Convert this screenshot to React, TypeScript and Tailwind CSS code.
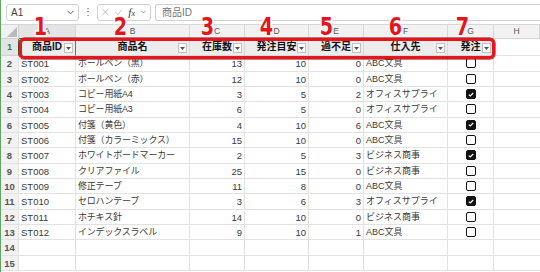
import { Fragment } from "react";

type Row = {
  id: string;
  name: string;
  stock: number;
  target: number;
  shortage: number;
  supplier: string;
  order: boolean;
};

const rows: Row[] = [
  { id: "ST001", name: "ボールペン（黒）", stock: 13, target: 10, shortage: 0, supplier: "ABC文具", order: false },
  { id: "ST002", name: "ボールペン（赤）", stock: 12, target: 10, shortage: 0, supplier: "ABC文具", order: false },
  { id: "ST003", name: "コピー用紙A4", stock: 3, target: 5, shortage: 2, supplier: "オフィスサプライ", order: true },
  { id: "ST004", name: "コピー用紙A3", stock: 6, target: 5, shortage: 0, supplier: "オフィスサプライ", order: false },
  { id: "ST005", name: "付箋（黄色）", stock: 4, target: 10, shortage: 6, supplier: "ABC文具", order: true },
  { id: "ST006", name: "付箋（カラーミックス）", stock: 15, target: 10, shortage: 0, supplier: "ABC文具", order: false },
  { id: "ST007", name: "ホワイトボードマーカー", stock: 2, target: 5, shortage: 3, supplier: "ビジネス商事", order: true },
  { id: "ST008", name: "クリアファイル", stock: 25, target: 15, shortage: 0, supplier: "ビジネス商事", order: false },
  { id: "ST009", name: "修正テープ", stock: 11, target: 8, shortage: 0, supplier: "ABC文具", order: false },
  { id: "ST010", name: "セロハンテープ", stock: 3, target: 6, shortage: 3, supplier: "オフィスサプライ", order: true },
  { id: "ST011", name: "ホチキス針", stock: 14, target: 10, shortage: 0, supplier: "ビジネス商事", order: false },
  { id: "ST012", name: "インデックスラベル", stock: 9, target: 10, shortage: 1, supplier: "ABC文具", order: false },
];

const headers = ["商品ID", "商品名", "在庫数", "発注目安", "過不足", "仕入先", "発注"];
const letters = ["A", "B", "C", "D", "E", "F", "G", "H"];

// red callout numbers above the column headers
const callouts = [
  { n: "1", left: "left-[31px]" },
  { n: "2", left: "left-[111px]" },
  { n: "3", left: "left-[198px]" },
  { n: "4", left: "left-[257px]" },
  { n: "5", left: "left-[317px]" },
  { n: "6", left: "left-[386px]" },
  { n: "7", left: "left-[453px]" },
];

const cell = "border-r border-b border-[#e2e2e2] h-[15.33px] overflow-hidden whitespace-nowrap text-[9.5px] leading-[15px] text-[#3a3a3a]";

function FilterButton() {
  return (
    <span className="absolute right-[2px] top-[4px] w-[9px] h-[10px] border border-[#c2c2c2] bg-[#fafafa] flex items-center justify-center">
      <svg width="5" height="3" viewBox="0 0 5 3">
        <path d="M0 0h5L2.5 3z" fill="#555" />
      </svg>
    </span>
  );
}

function Checkbox({ checked }: { checked: boolean }) {
  return (
    <span
      className={`w-[10px] h-[10px] rounded-[2px] border-[1.6px] border-[#111] flex items-center justify-center ${
        checked ? "bg-[#111]" : "bg-white"
      }`}
    >
      {checked ? (
        <svg width="6" height="5" viewBox="0 0 6 5">
          <path d="M0.8 2.6 2.3 4 5.2 1" stroke="white" strokeWidth="1.2" fill="none" />
        </svg>
      ) : null}
    </span>
  );
}

export default function App() {
  return (
    <div className="relative w-[540px] h-[272px] overflow-hidden bg-white border-l border-[#5fa565] font-['Liberation_Sans','Noto_Sans_CJK_JP',sans-serif]">
      {/* formula bar */}
      <div className="h-[25px] flex items-center gap-[4px] pl-[5px] bg-white border-b border-[#d6d6d6]">
        <div className="w-[73px] h-[17px] border border-[#d2d2d2] rounded-[3px] flex items-center justify-between px-[4px] text-[10px] text-[#444]">
          <span>A1</span>
          <svg width="7" height="5" viewBox="0 0 7 5">
            <path d="M0.5 0.8 3.5 3.8 6.5 0.8" stroke="#555" fill="none" strokeWidth="1" />
          </svg>
        </div>
        <span className="text-[10px] text-[#666] leading-none">⋮</span>
        <div className="w-[54px] h-[17px] border border-[#d2d2d2] rounded-[3px] flex items-center gap-[6px] px-[4px]">
          <svg width="8" height="8" viewBox="0 0 8 8">
            <path d="M0.5 0.5 7.5 7.5M7.5 0.5 0.5 7.5" stroke="#b8b8b8" strokeWidth="1" />
          </svg>
          <svg width="9" height="8" viewBox="0 0 9 8">
            <path d="M0.5 4 3.5 7 8.5 0.8" stroke="#b8b8b8" strokeWidth="1" fill="none" />
          </svg>
          <span className="font-['Liberation_Serif',serif] italic text-[11px] text-[#333] leading-none">
            f<span className="text-[8px]">x</span>
          </span>
          <svg width="6" height="4" viewBox="0 0 6 4">
            <path d="M0.5 0.5 3 3.2 5.5 0.5" stroke="#888" fill="none" strokeWidth="0.9" />
          </svg>
        </div>
        <div className="flex-1 h-[17px] border border-[#d2d2d2] border-r-0 rounded-l-[3px] flex items-center px-[6px] text-[10px] text-[#777]">
          商品ID
        </div>
      </div>

      {/* sheet */}
      <div className="grid grid-cols-[18px_57px_114px_55px_64px_55px_84px_46px_1fr]">
        {/* column header row */}
        <div className="relative h-[14px] bg-[#f2f2f2] border-r border-b border-[#d0d0d0]">
          <svg className="absolute right-[1px] bottom-[1px]" width="10" height="10" viewBox="0 0 10 10">
            <path d="M10 0V10H0z" fill="#b9b9b9" />
          </svg>
        </div>
        {letters.map((l, i) => (
          <div
            key={l}
            className={`h-[14px] flex items-center justify-center text-[8.5px] text-[#555] border-r border-b ${
              i === 0 ? "bg-[#e4e4e4] border-b-[#3f8f4a]" : "bg-[#f2f2f2]"
            } border-[#d6d6d6]`}
          >
            {l}
          </div>
        ))}

        {/* row 1 : table header */}
        <div className="h-[17.33px] flex items-center justify-center text-[8.5px] font-bold text-[#2f7b3a] bg-[#e4e4e4] border-r border-b border-[#d0d0d0] border-r-[#3f8f4a]">
          1
        </div>
        {headers.map((h, i) => (
          <div
            key={h}
            className={`relative h-[17.33px] flex items-center justify-center text-[10px] font-bold text-[#111] bg-[#ececec] border-b border-[#d8d8d8] ${
              i === 0 ? "border-r border-r-[#3f8f4a]" : "border-r"
            }`}
          >
            <span className="leading-none">{h}</span>
            <FilterButton />
          </div>
        ))}
        <div className="h-[17.33px] border-b border-[#e2e2e2]" />

        {/* data rows */}
        {rows.map((r, i) => (
          <Fragment key={r.id}>
            <div className={`${cell} bg-[#f2f2f2] border-[#d0d0d0] text-center text-[8.5px] font-bold text-[#555]`}>{i + 2}</div>
            <div className={`${cell} pl-[2px]`}>{r.id}</div>
            <div className={`${cell} pl-[2px] text-[9px] tracking-[-0.2px]`}>{r.name}</div>
            <div className={`${cell} text-right pr-[2px]`}>{r.stock}</div>
            <div className={`${cell} text-right pr-[2px]`}>{r.target}</div>
            <div className={`${cell} text-right pr-[2px]`}>{r.shortage}</div>
            <div className={`${cell} pl-[2px] text-[9px]`}>{r.supplier}</div>
            <div className={`${cell} flex items-center justify-center`}>
              <Checkbox checked={r.order} />
            </div>
            <div className={`${cell} border-r-0`} />
          </Fragment>
        ))}

        {/* empty rows */}
        {[14, 15].map((n) => (
          <Fragment key={n}>
            <div className={`${cell} bg-[#f2f2f2] border-[#d0d0d0] text-center text-[8.5px] font-bold text-[#555]`}>{n}</div>
            {letters.map((l) => (
              <div key={l} className={l === "H" ? `${cell} border-r-0` : cell} />
            ))}
          </Fragment>
        ))}
      </div>

      {/* red highlight box around the header row */}
      <div className="absolute left-[18px] top-[38px] w-[476px] h-[21px] border-[3px] border-[#e8141b] rounded-[5px] shadow-[0_0_0_0.5px_#7a0000]" />

      {/* red callout numbers */}
      {callouts.map((c) => (
        <span
          key={c.n}
          className={`absolute ${c.left} top-[15px] text-[24px] leading-none font-bold text-[#e8141b] scale-x-[0.8] [-webkit-text-stroke:3px_white] [paint-order:stroke_fill] font-['DejaVu_Sans',sans-serif]`}
        >
          {c.n}
        </span>
      ))}
    </div>
  );
}
